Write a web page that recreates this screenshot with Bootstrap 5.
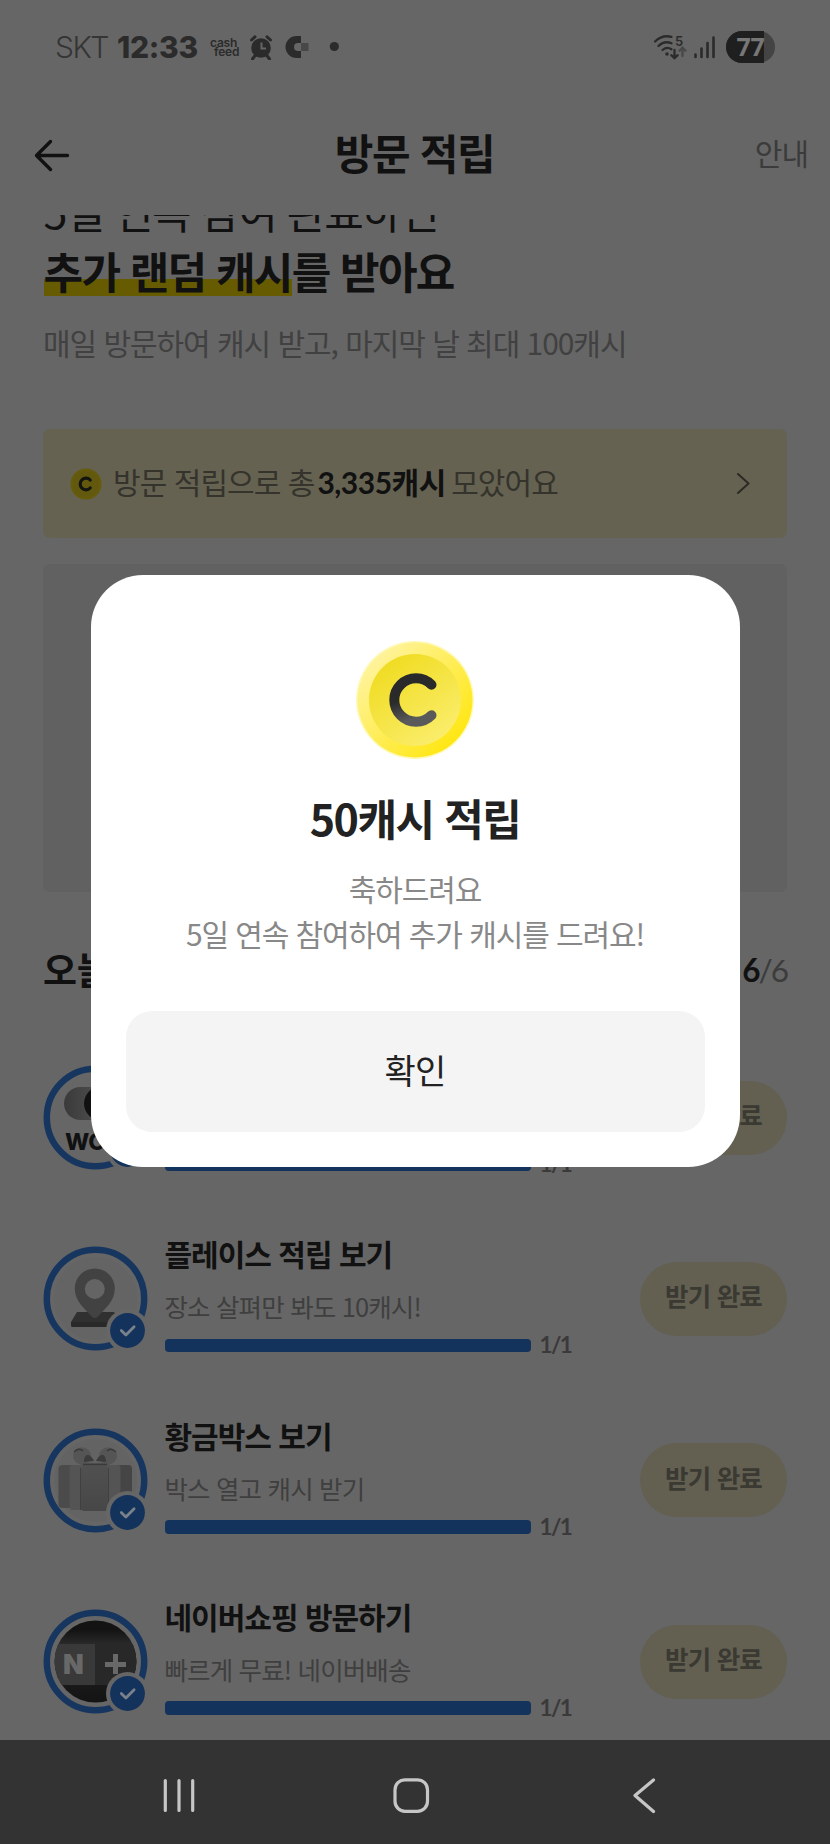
<!DOCTYPE html>
<html lang="ko">
<head>
<meta charset="utf-8">
<meta name="viewport" content="width=device-width, initial-scale=1">
<title>방문 적립</title>
<link href="https://cdn.jsdelivr.net/npm/bootstrap@5.3.0/dist/css/bootstrap.min.css" rel="stylesheet">
<style>
  body { background:#666; color:#111; font-family:"Noto Sans CJK KR",sans-serif; letter-spacing:-.02em; }
  .screen { width:830px; height:1844px; }
  .status { height:78px; margin-bottom:1px; font-family:Inter,sans-serif; color:#2b2b2b; }
  .carrier { font-size:30px; line-height:36px; font-weight:300; letter-spacing:-1.5px; width:62px; margin-left:55px; color:#353535; }
  .clock { font-size:30px; line-height:36px; font-weight:800; letter-spacing:-.3px; width:93px; }
  .cashfeed { width:40px; font-size:12px; font-weight:600; letter-spacing:-.2px; }
  .cashfeed span { line-height:10px; height:9px; }
  .topbar { height:136px; padding:10px 22px 0 33px; }
  .topbar h1 { font-size:42px; line-height:60px; letter-spacing:-1.4px; }
  .topbar .side { width:90px; }
  .topbar .side:first-child { width:78px; padding-top:5px; }
  .guide { font-size:30px; line-height:44px; color:#3b3b3b; letter-spacing:-1px; }
  .content { height:1525px; padding:0 43px; }
  .headline { font-size:43px; line-height:60px; margin-top:-35.5px; letter-spacing:-1.65px; padding-left:.5px; }
  .marker { background:linear-gradient(#665b00,#665b00) 0 39px/100% 17px no-repeat; display:inline-block; height:60px; vertical-align:top; }
  .sub { font-size:30px; line-height:44px; margin-top:20.5px; color:#414141; letter-spacing:-1.05px; }
  .total { height:109px; margin-top:65px; border-radius:7px; background:#656251; font-size:30px; line-height:44px; padding:0 35px 0 27px; color:#34332c; letter-spacing:-.95px; }
  .total-text { margin:-5px 0 0 11px; }
  .total b { color:#111; font-family:Lato,"Noto Sans CJK KR",sans-serif; letter-spacing:-.5px; margin:0 -2px 0 -4.5px; }
  .ad-slot { height:328px; margin-top:26px; border-radius:7px; background:#616161; }
  .section-row { height:44px; margin-top:55px; margin-bottom:74px; }
  .section-row h2 { font-size:37px; line-height:44px; }
  .count { font-family:Lato,sans-serif; font-size:31.5px; line-height:44px; color:#3c3c3c; letter-spacing:-2px; padding:2px 0 0 0; }
  .count b { color:#111; }
  .mission { height:104px; margin-bottom:77.4px; }
  .mission-icon { width:104px; height:104px; }
  .mission-text { width:420px; margin:-13px 0 0 17.5px; }
  .mission-text h3 { font-size:30px; line-height:40px; margin-bottom:15px; letter-spacing:-1px; }
  .mission-text p { font-size:25.5px; line-height:36px; margin-bottom:11px; color:#3f3f3f; letter-spacing:-.85px; }
  .bar-row { height:20px; }
  .bar-row .progress { width:366px; height:13.5px; border-radius:4px; background:#5a5a5a; }
  .bar-row .progress-bar { background:#14335c; }
  .step-count { font-family:Lato,sans-serif; font-weight:700; font-size:22.5px; line-height:20px; color:#3a3a3a; margin-left:9px; letter-spacing:-1.6px; }
  .claimed { width:147px; height:74px; background:#636052; color:#3a3932; font-size:25.5px; line-height:36px; font-weight:700; margin-top:15.5px; padding-bottom:7px; letter-spacing:-.8px; }
  .sysnav { height:104px; background:#333; }
  .overlay { padding-top:574.5px; }
  .dialog-card { width:649px; height:592px; border-radius:52px; background:#fff; padding:63px 35px 34.5px; color:#222; }
  .dialog-card h2 { font-size:43px; line-height:60px; margin:25px 0 0; letter-spacing:-1.5px; }
  .dialog-card p { font-size:30px; line-height:45.5px; margin:19px 0 0; color:#888; letter-spacing:-1.1px; }
  .ok-btn, .ok-btn:hover { height:121px; border-radius:26px; background:#f4f4f4; font-size:34px; color:#222; border:0; letter-spacing:-.7px; padding:0 0 4px; }
</style>
<script src="https://cdn.jsdelivr.net/npm/bootstrap@5.3.0/dist/js/bootstrap.bundle.min.js"></script>
</head>
<body>
<svg width="0" height="0" class="position-absolute">
  <defs>
    <g id="ring"><circle cx="52.500" cy="52.500" r="48.700" fill="none" stroke="#17365f" stroke-width="6.500"/></g>
    <g id="done"><circle cx="84.500" cy="84.500" r="21.500" fill="#666"/><circle cx="84.500" cy="84.500" r="17.400" fill="#14335c"/><path d="M78.300 84.500l4.600 4.600 8.200-8.400" fill="none" stroke="#7a818b" stroke-width="2.800" stroke-linecap="round" stroke-linejoin="round"/></g>
    <linearGradient id="toggle"><stop offset="0" stop-color="#3a3a3a"/><stop offset="1" stop-color="#5c5c5c"/></linearGradient>
    <linearGradient id="rim" x1="0" y1="0" x2="1" y2="1"><stop offset=".15" stop-color="#fff39a"/><stop offset=".85" stop-color="#ffe714"/></linearGradient>
    <linearGradient id="face" x1=".1" y1="0" x2=".8" y2="1"><stop offset=".1" stop-color="#f0dc22"/><stop offset="1" stop-color="#fbee70"/></linearGradient>
    <linearGradient id="cee" x1="0" y1="0" x2=".3" y2="1"><stop offset=".5" stop-color="#2a2a2a"/><stop offset="1" stop-color="#5a5a5a"/></linearGradient>
    <linearGradient id="box" x1="0" y1="0" x2="0" y2="1"><stop offset="0" stop-color="#505050"/><stop offset="1" stop-color="#474747"/></linearGradient>
    <linearGradient id="dark" x1="0" y1="0" x2="0" y2="1"><stop offset=".2" stop-color="#131313"/><stop offset=".34" stop-color="#2a2a2a"/><stop offset=".75" stop-color="#181818"/><stop offset="1" stop-color="#111"/></linearGradient>
    <clipPath id="disc"><circle cx="52.500" cy="52.500" r="41"/></clipPath>
  </defs>
</svg>
<div class="screen position-relative overflow-hidden d-flex flex-column">

  <div class="status d-flex align-items-center flex-shrink-0 pt-3">
    <span class="carrier">SKT</span><span class="clock">12:33</span>
    <div class="cashfeed d-flex flex-column"><span>cash</span><span class="ps-1">feed</span></div>
    <svg width="90" height="26" viewBox="0 0 90 26" fill="#2b2b2b">
      <circle cx="11" cy="14" r="9.800"/><path d="M5.500 21l-3 4M16.500 21l3 4M1.500 6l3.500-3.200M20.500 6l-3.500-3.200" stroke="#2b2b2b" stroke-width="3" stroke-linecap="round"/>
      <path d="M11.500 8.500v6h4.500" fill="none" stroke="#666" stroke-width="2"/>
      <path d="M51 2V9h-3a4 4 0 0 0 0 8h3v7h-4.500a11 11 0 0 1 0-22z"/><path d="M51 9h7.500v8H51z" fill="#484848"/>
      <circle cx="84.300" cy="12.500" r="4.600"/>
    </svg>
    <svg class="ms-auto me-5" width="129" height="34" viewBox="0 0 129 34">
      <g fill="none" stroke="#2b2b2b" stroke-width="2.300" stroke-linecap="round">
        <path d="M2 11.500C7 6.500 13 5.500 18.500 6.800M5.500 16c4-4 8.500-4.600 13-2.800M9.500 20c3-2.600 6-2.800 9-.8"/>
        <path d="M21.500 20v8M18.300 25.200l3.200 3 3.200-3"/><path d="M29.500 26v-8M26.500 20.700l3-3 3 3" stroke="#484848"/>
        <path d="M42.500 24.500v2.500M48.500 18.500V27M54.500 13v14M60.500 7.500V27" stroke-width="2.600"/>
      </g>
      <circle cx="14" cy="24" r="1.800" fill="#2b2b2b"/>
      <text x="22" y="16" font-family="Inter" font-size="13" font-weight="600" fill="#2b2b2b">5</text>
      <rect x="73" y="1" width="49" height="32" rx="16" fill="#444"/>
      <path d="M89 1h22v32H89a16 16 0 010-32z" fill="#1f1f1f"/>
      <text x="83.500" y="26" font-family="Open Sans" font-size="25" font-weight="700" fill="#777" textLength="28">77</text>
    </svg>
  </div>

  <header class="topbar d-flex align-items-center justify-content-between flex-shrink-0">
    <div class="side"><svg width="38" height="36" viewBox="0 0 38 36" fill="none" stroke="#111" stroke-width="3.400" stroke-linecap="round" stroke-linejoin="round"><path d="M34.500 18.500H3.500M17.500 4.500L3.500 18.500l14 14"/></svg></div>
    <h1 class="m-0 fw-bold">방문 적립</h1>
    <div class="side guide text-end">안내</div>
  </header>

  <main class="content overflow-hidden flex-shrink-0">
    <div class="headline">5일 연속 참여 완료하면<br><b><span class="marker">추가 랜덤 캐시</span>를 받아요</b></div>
    <div class="sub">매일 방문하여 캐시 받고, 마지막 날 최대 100캐시</div>

    <div class="total d-flex align-items-center">
      <svg width="32" height="32" viewBox="0 0 32 32"><circle cx="16" cy="16" r="15.500" fill="#665b0a"/><circle cx="16" cy="16" r="13" fill="#62590f"/><path d="M20.200 12a5.800 5.800 0 100 8" fill="none" stroke="#15150f" stroke-width="3.200" stroke-linecap="round"/></svg>
      <span class="total-text">방문 적립으로 총 <b>3,335캐시</b> 모았어요</span>
      <svg class="ms-auto" width="16" height="22" viewBox="0 0 16 22" fill="none" stroke="#2b2a25" stroke-width="2" stroke-linecap="round" stroke-linejoin="round"><path d="M2 1l10.500 9.500L2 20"/></svg>
    </div>

    <div class="ad-slot"></div>

    <div class="section-row d-flex align-items-center justify-content-between">
      <h2 class="m-0 fw-bold">오늘</h2>
      <div class="count"><b>6</b>/6</div>
    </div>

    <div class="mission d-flex">
      <svg class="mission-icon flex-shrink-0" viewBox="0 0 104 104" overflow="visible"><use href="#ring"/>
        <rect x="21" y="22" width="60" height="33" rx="16.500" fill="url(#toggle)"/><circle cx="58" cy="38.500" r="17" fill="#111"/>
        <text x="22" y="84.500" font-family="Inter" font-size="23" font-weight="800" fill="#111">WON</text><use href="#done"/></svg>
      <div class="mission-text"><h3>&nbsp;</h3><p>&nbsp;</p>
        <div class="bar-row d-flex align-items-center"><div class="progress flex-shrink-0"><div class="progress-bar w-100"></div></div><span class="step-count">1/1</span></div></div>
      <div class="claimed rounded-pill ms-auto d-flex align-items-center justify-content-center">받기 완료</div>
    </div>

    <div class="mission d-flex">
      <svg class="mission-icon flex-shrink-0" viewBox="0 0 104 104" overflow="visible"><circle cx="52.500" cy="52.500" r="41.500" fill="#646464"/><use href="#ring"/>
        <path d="M34 66h37l6 10v3a2 2 0 01-2 2H30a2 2 0 01-2-2v-3z" fill="#303030"/><path d="M28 76h49v3a2 2 0 01-2 2H30a2 2 0 01-2-2z" fill="#292929"/>
        <path fill-rule="evenodd" d="M51.800 22.500a20 20 0 0120 20c0 13-10 20-17 28.200q-3 2.600-6 0C41.800 62.500 31.800 55.500 31.800 42.500a20 20 0 0120-20zm0 10.500a10 10 0 100 20 10 10 0 000-20z" fill="#424242"/><use href="#done"/></svg>
      <div class="mission-text"><h3 class="fw-bold">플레이스 적립 보기</h3><p>장소 살펴만 봐도 10캐시!</p>
        <div class="bar-row d-flex align-items-center"><div class="progress flex-shrink-0"><div class="progress-bar w-100"></div></div><span class="step-count">1/1</span></div></div>
      <div class="claimed rounded-pill ms-auto d-flex align-items-center justify-content-center">받기 완료</div>
    </div>

    <div class="mission d-flex">
      <svg class="mission-icon flex-shrink-0" viewBox="0 0 104 104" overflow="visible"><circle cx="52.500" cy="52.500" r="41.500" fill="#636363"/><use href="#ring"/>
        <rect x="15.500" y="37" width="20" height="43" rx="4" fill="#4b4b4b"/><rect x="69" y="37" width="20" height="43" rx="4" fill="#454545"/>
        <rect x="26.500" y="37" width="51" height="45" rx="3" fill="#545454"/><rect x="37.500" y="38" width="28" height="45" rx="4" fill="url(#box)"/>
        <path d="M65.500 40v42M37.500 40v42" stroke="#404040" stroke-width="1"/>
        <ellipse cx="39" cy="28" rx="9" ry="8.500" fill="#555"/><ellipse cx="65" cy="28" rx="9" ry="8.500" fill="#555"/>
        <path d="M37 37c4-3 10-2 15-2s11-1 15 2z" fill="#555"/>
        <path d="M41 34c0-9 6-9 10-1zM63 34c0-9-6-9-10-1z" fill="#3c3c3c"/><path d="M31 24q5-5 9-1M73 24q-5-5-9-1M40 36.500h24" stroke="#3a3a3a" stroke-width="1.300" fill="none"/><use href="#done"/></svg>
      <div class="mission-text"><h3 class="fw-bold">황금박스 보기</h3><p>박스 열고 캐시 받기</p>
        <div class="bar-row d-flex align-items-center"><div class="progress flex-shrink-0"><div class="progress-bar w-100"></div></div><span class="step-count">1/1</span></div></div>
      <div class="claimed rounded-pill ms-auto d-flex align-items-center justify-content-center">받기 완료</div>
    </div>

    <div class="mission d-flex">
      <svg class="mission-icon flex-shrink-0" viewBox="0 0 104 104" overflow="visible"><use href="#ring"/>
        <g clip-path="url(#disc)"><path d="M0 0h104v104H0z" fill="url(#dark)"/><path d="M0 35h52v41H0z" fill="#393939"/><path d="M52 35h52v41H52z" fill="#282828"/></g>
        <text x="20" y="64.500" font-family="Inter" font-size="27" font-weight="900" fill="#686868">N</text><path d="M72.500 45v20M62 55.500h21" stroke="#686868" stroke-width="5"/><use href="#done"/></svg>
      <div class="mission-text"><h3 class="fw-bold">네이버쇼핑 방문하기</h3><p>빠르게 무료! 네이버배송</p>
        <div class="bar-row d-flex align-items-center"><div class="progress flex-shrink-0"><div class="progress-bar w-100"></div></div><span class="step-count">1/1</span></div></div>
      <div class="claimed rounded-pill ms-auto d-flex align-items-center justify-content-center">받기 완료</div>
    </div>
  </main>

  <nav class="sysnav flex-shrink-0">
    <svg width="830" height="104" viewBox="0 0 830 104" fill="none" stroke="#c6c6c6" stroke-width="3.200" stroke-linecap="round" stroke-linejoin="round">
      <path d="M165.300 40.500v30M179 40.500v30M192.700 40.500v30"/><rect x="395" y="39.800" width="32.500" height="31.500" rx="10"/><path d="M653.500 40L635 55.500 653.500 71.500"/>
    </svg>
  </nav>

  <div class="overlay position-absolute top-0 start-0 w-100 h-100 d-flex justify-content-center align-items-start">
    <div class="dialog-card d-flex flex-column align-items-center text-center" role="dialog">
      <svg width="124" height="124" viewBox="0 0 124 124" class="flex-shrink-0">
        <circle cx="62" cy="62" r="59" fill="#fff9b8"/><circle cx="62" cy="62" r="57.500" fill="url(#rim)"/><circle cx="62" cy="62" r="46" fill="url(#face)"/>
        <path d="M78.500 46.800a21.700 21.700 0 100 30.400" fill="none" stroke="url(#cee)" stroke-width="10" stroke-linecap="round"/>
      </svg>
      <h2 class="fw-bold">50캐시 적립</h2>
      <p>축하드려요<br>5일 연속 참여하여 추가 캐시를 드려요!</p>
      <button class="ok-btn btn w-100 mt-auto">확인</button>
    </div>
  </div>
</div>
</body>
</html>
